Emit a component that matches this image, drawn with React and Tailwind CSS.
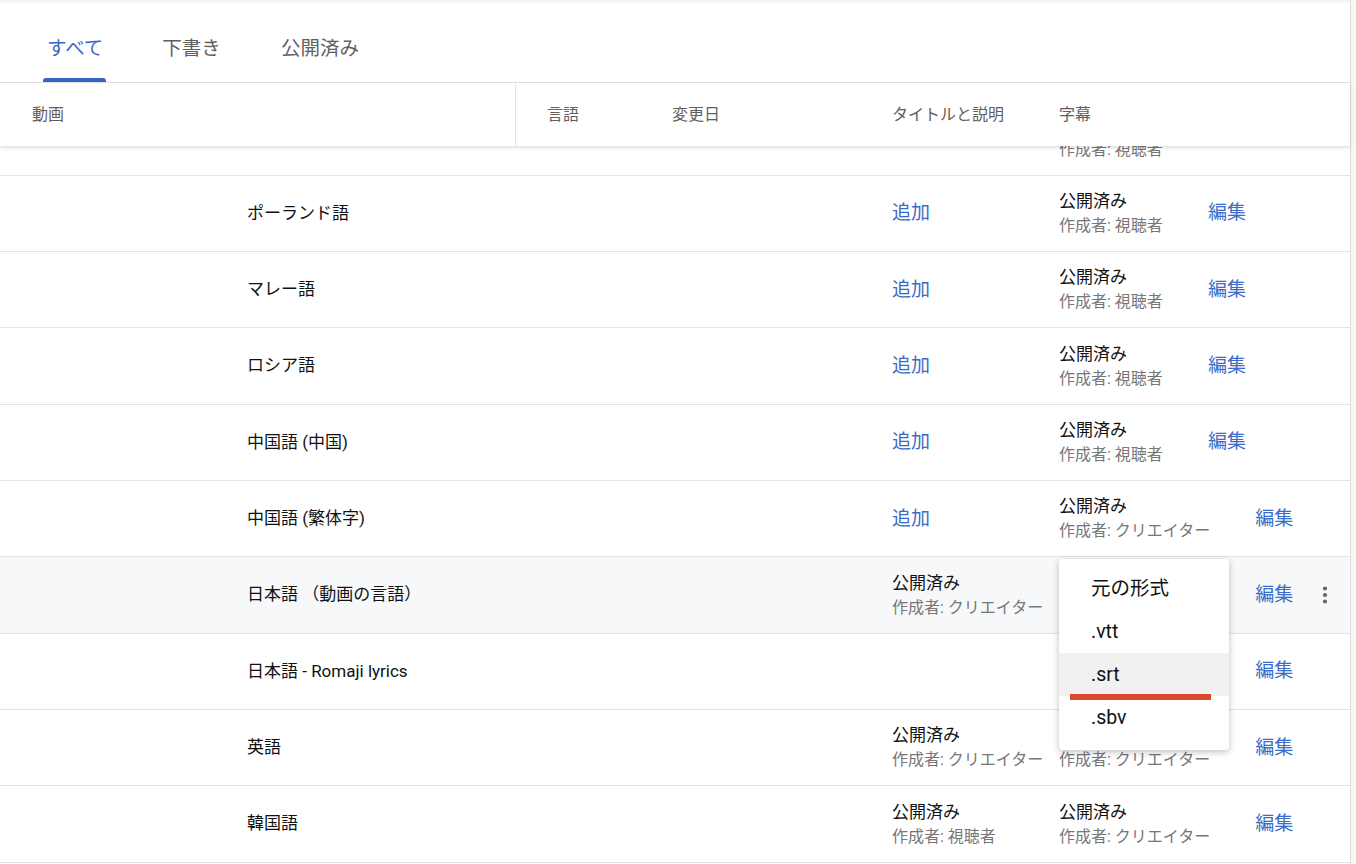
import React from 'react';

const rows = [
  { name: 'フランス語', add: true, sub: { status: '公開済み', by: '視聴者' } },
  { name: 'ポーランド語', add: true, sub: { status: '公開済み', by: '視聴者' } },
  { name: 'マレー語', add: true, sub: { status: '公開済み', by: '視聴者' } },
  { name: 'ロシア語', add: true, sub: { status: '公開済み', by: '視聴者' } },
  { name: '中国語 (中国)', add: true, sub: { status: '公開済み', by: '視聴者' } },
  { name: '中国語 (繁体字)', add: true, sub: { status: '公開済み', by: 'クリエイター' } },
  {
    name: '日本語 （動画の言語）',
    title: { status: '公開済み', by: 'クリエイター' },
    sub: { status: '公開済み', by: 'クリエイター' },
    active: true,
  },
  { name: '日本語 - Romaji lyrics', sub: { status: '公開済み', by: 'クリエイター' } },
  {
    name: '英語',
    title: { status: '公開済み', by: 'クリエイター' },
    sub: { status: '公開済み', by: 'クリエイター' },
  },
  {
    name: '韓国語',
    title: { status: '公開済み', by: '視聴者' },
    sub: { status: '公開済み', by: 'クリエイター' },
  },
];

const Status = ({ status, by }) => (
  <div className="flex flex-col">
    <span className="text-[17px] leading-[25px] text-[#111]">{status}</span>
    <span className="text-[16px] leading-[24px] text-[#777]">作成者: {by}</span>
  </div>
);

const Row = ({ row, first }) => (
  <div
    className={`flex items-center h-[76.33px] shrink-0 border-b border-[#e3e3e3] ${
      row.active ? 'bg-[#f7f8fa]' : 'bg-white'
    } ${first ? '-mt-[46.5px]' : ''}`}
  >
    {/* language */}
    <div className="w-[892px] pl-[247px] text-[17px] text-[#111]">{row.name}</div>

    {/* title & description */}
    <div className="w-[167px]">
      {row.add && <span className="text-[19px] text-[#3b6cc7]">追加</span>}
      {row.title && <Status {...row.title} />}
    </div>

    {/* subtitles */}
    <div className="flex items-center gap-[45px]">
      <Status {...row.sub} />
      <span className="text-[19px] text-[#3b6cc7]">編集</span>
    </div>

    {row.active && (
      <div className="ml-auto mr-[13px] w-[24px] h-[24px] flex items-center justify-center">
        <svg width="6" height="20" viewBox="0 0 6 20" fill="#666">
          <circle cx="3" cy="3.5" r="2.1" />
          <circle cx="3" cy="10" r="2.1" />
          <circle cx="3" cy="16.5" r="2.1" />
        </svg>
      </div>
    )}
  </div>
);

export default function App() {
  return (
    <div
      className="relative w-[1356px] h-[864px] overflow-hidden bg-[#f6f6f6]"
      style={{ fontFamily: 'Roboto, "Noto Sans CJK JP", sans-serif' }}
    >
      <div className="w-[1351px] h-full bg-white border-r border-[#dcdcdc] flex flex-col">
        {/* Tabs */}
        <div className="flex h-[83px] shrink-0 pl-[43px] gap-[52px] border-b border-[#e0e0e0] shadow-[inset_0_5px_4px_-3px_rgba(0,0,0,0.07)]">
          <div className="relative flex items-center h-full pt-[16px] pl-[4px] pr-[3px] text-[19.5px] text-[#3a66c4]">
            すべて
            <div className="absolute bottom-0 left-0 right-0 h-[4px] rounded-t-[3px] bg-[#3463c9]" />
          </div>
          <div className="flex items-center h-full pt-[16px] px-[4px] text-[19.5px] text-[#606060]">下書き</div>
          <div className="flex items-center h-full pt-[16px] px-[4px] text-[19.5px] text-[#606060]">公開済み</div>
        </div>

        {/* Table header */}
        <div className="relative z-10 flex h-[63px] shrink-0 bg-white text-[16px] text-[#606060] shadow-[0_2px_3px_rgba(0,0,0,0.12)]">
          <div className="w-[516px] pl-[32px] flex items-center border-r border-[#e3e3e3]">動画</div>
          <div className="w-[156px] pl-[31px] flex items-center">言語</div>
          <div className="w-[220px] flex items-center">変更日</div>
          <div className="w-[167px] flex items-center">タイトルと説明</div>
          <div className="flex items-center">字幕</div>
        </div>

        {/* Rows */}
        <div className="flex-1 overflow-hidden flex flex-col">
          {rows.map((row, i) => (
            <Row key={i} row={row} first={i === 0} />
          ))}
        </div>
      </div>

      {/* Download format menu */}
      <div className="absolute left-[1059px] top-[559px] w-[170px] h-[191px] bg-white rounded-[4px] shadow-[0_2px_7px_rgba(0,0,0,0.25)] pt-[8px] z-20">
        {['元の形式', '.vtt', '.srt', '.sbv'].map((item) => (
          <div
            key={item}
            className={`h-[43px] flex items-center pl-[32px] text-[19.5px] text-[#111] ${
              item === '.srt' ? 'bg-[#f1f1f1]' : ''
            }`}
          >
            {item}
          </div>
        ))}
      </div>

      {/* Annotation underline */}
      <div className="absolute left-[1070px] top-[694px] w-[141px] h-[6px] bg-[#db4a2e] z-30" />
    </div>
  );
}
